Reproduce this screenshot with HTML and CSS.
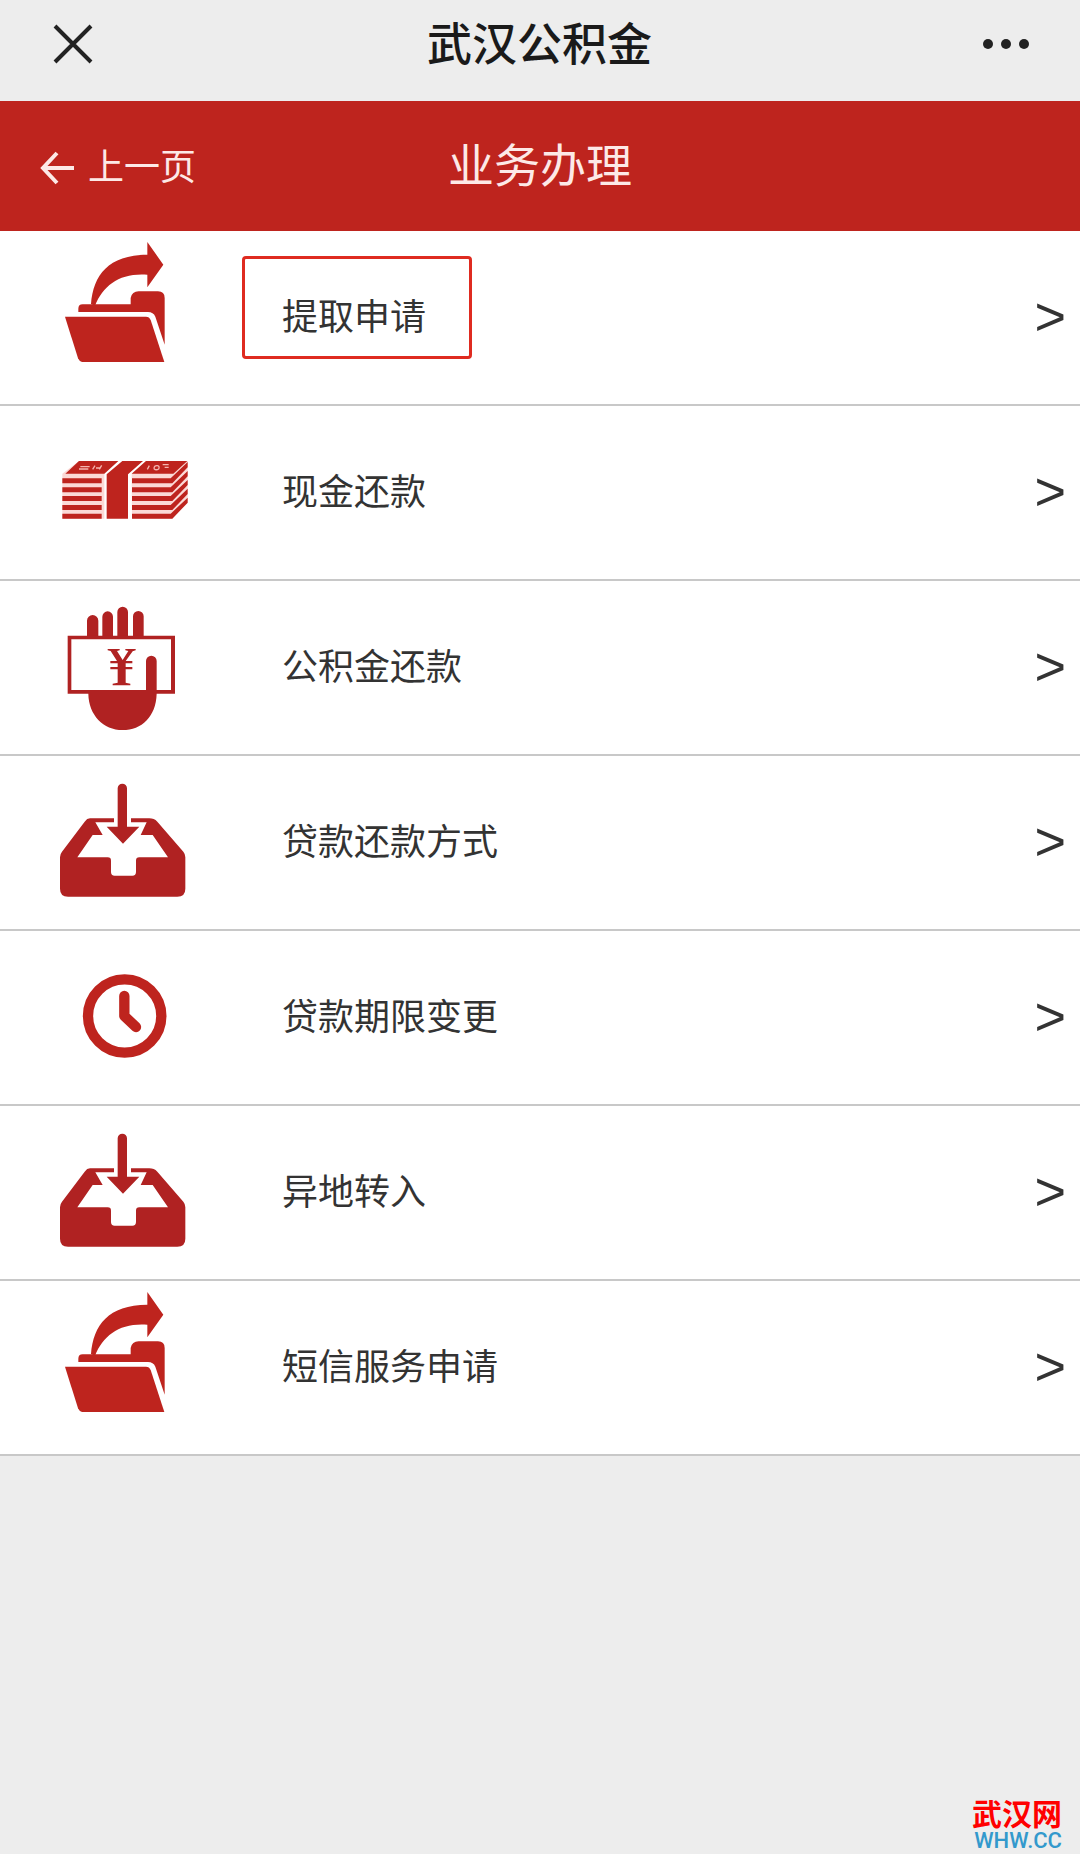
FILE: index.html
```html
<!DOCTYPE html>
<html lang="zh-CN">
<head>
  <meta charset="UTF-8" />
  <meta name="viewport" content="width=device-width, initial-scale=1.0"/>
  <title>武汉公积金</title>
  <link rel="stylesheet" href="styles.css">
</head>
<body>

  <!-- Shared icon shapes -->
  <svg class="icon-defs" aria-hidden="true">
    <symbol id="icon-folder" viewBox="0 3 600 519">
      <path d="M153 222C160 135 205 75 322 74V36L370 104L322 172V134C240 128 190 165 165 227Z"/>
      <path d="M115 246V236Q115 223 128 223H272V204Q276 184 296 184H354Q374 184 374 204V344L346 260Q340 246 324 246Z"/>
      <path d="M75 260H318Q328 260 332 270L373 396H126Q118 394 114 385Z"/>
    </symbol>
    <symbol id="icon-tray" viewBox="0 -42 600 519">
      <path d="M233 55A14 14 0 0 1 261 55V170H298L249 221L200 170H233Z"/>
      <path fill-rule="evenodd" d="M150 145H222V157H166L188 195H158L112 262H203Q213 262 213 272V306Q213 317 224 317H277Q288 317 288 306V272Q288 262 298 262H384L338 195H302L320 157H273V145H328Q342 145 352 155L430 245Q436 252 436 262V356Q436 380 412 380H84Q60 380 60 356V262Q60 252 66 245L134 155Q141 145 150 145Z"/>
    </symbol>
  </svg>

  <!-- Top bar -->
  <header class="topbar">
    <button class="icon-btn" type="button" aria-label="关闭">
      <svg width="40" height="40" viewBox="0 0 40 40"><path class="line" d="M2 2L38 38M38 2L2 38"/></svg>
    </button>
    <h1>武汉公积金</h1>
    <button class="icon-btn" type="button" aria-label="更多">
      <svg width="48" height="40" viewBox="0 0 48 40"><circle cx="6" cy="20" r="5"/><circle cx="24" cy="20" r="5"/><circle cx="42" cy="20" r="5"/></svg>
    </button>
  </header>

  <!-- Page navigation -->
  <nav>
    <a class="back" href="#">
      <svg width="34" height="38" viewBox="0 0 34 38"><path d="M17 6L3 21L17 36M3 21H34"/></svg>
      <span>上一页</span>
    </a>
    <h2>业务办理</h2>
  </nav>

  <!-- Service list -->
  <ul class="services">
    <li><a href="#">
      <svg class="service-icon"><use href="#icon-folder"/></svg>
      <span class="label marked">提取申请</span><span class="arrow">&gt;</span>
    </a></li>
    <li><a href="#">
      <svg class="service-icon" viewBox="0 -102 600 519">
        <path class="bill-bg" d="M67 101L117 63H235L193 101V236H67ZM275 101L318 63H443V188L397 236H276Z"/>
        <path d="M67 115H185V130H67ZM67 142H185V157H67ZM67 168H185V183H67ZM67 195H185V210H67ZM67 221H185V236H67Z"/>
        <path d="M76 101L117 63H235L193 101ZM275 101L318 63H442L400 101Z"/>
        <path d="M200 236V103L247 63H309L264 103V236Z"/>
        <path d="M276 115H392L443 66V82L397 130H276ZM276 142H392L443 93V109L397 157H276ZM276 168H392L443 120V135L397 183H276ZM276 195H392L443 146V162L397 210H276ZM276 221H392L443 173V188L397 236H276Z"/>
        <path class="bill-mark" d="M117 87H145M121 80H149M158 88L165 77M168 84H180M178 88L185 76M322 88L328 77M342 86Q342 76 352 77Q360 79 356 87Q348 92 342 86M368 74H386M374 82H386"/>
      </svg>
      <span class="label">现金还款</span><span class="arrow">&gt;</span>
    </a></li>
    <li><a href="#">
      <svg class="service-icon dark" viewBox="0 -27 600 519">
        <path d="M141 138V92A17 17 0 0 1 175 92V138ZM187 138V80A16 16 0 0 1 219 80V138ZM232 138V66A16 16 0 0 1 264 66V138ZM279 138V79A16 16 0 0 1 311 79V138Z"/>
        <path fill-rule="evenodd" d="M83 137H405V311H350C348 380 305 420 248 420C190 420 146 375 145 311H83ZM94 148V300H318V213A16 16 0 0 1 350 213V300H393V148Z"/>
        <path d="M203 177H239V181L231 183L248 210L265 183L256 181V177H287V181L278 184L257 213H277V220H257V231H277V238H257V278L271 281V286H218V281L233 278V238H211V231H233V220H211V213H231L212 183L203 181Z"/>
      </svg>
      <span class="label">公积金还款</span><span class="arrow">&gt;</span>
    </a></li>
    <li><a href="#">
      <svg class="service-icon dark"><use href="#icon-tray"/></svg>
      <span class="label">贷款还款方式</span><span class="arrow">&gt;</span>
    </a></li>
    <li><a href="#">
      <svg class="service-icon" viewBox="-60 -57 600 519">
        <circle class="clock-ring" cx="194" cy="198" r="110"/>
        <path class="clock-hand" d="M193 138V198L228 231"/>
      </svg>
      <span class="label">贷款期限变更</span><span class="arrow">&gt;</span>
    </a></li>
    <li><a href="#">
      <svg class="service-icon dark"><use href="#icon-tray"/></svg>
      <span class="label">异地转入</span><span class="arrow">&gt;</span>
    </a></li>
    <li><a href="#">
      <svg class="service-icon"><use href="#icon-folder"/></svg>
      <span class="label">短信服务申请</span><span class="arrow">&gt;</span>
    </a></li>
  </ul>

  <div class="watermark">
    <strong>武汉网</strong>
    <span>WHW.CC</span>
  </div>

</body>
</html>
```
FILE: styles.css
```css
*,
*::after {
  box-sizing: border-box;
}

body {
  font-family: "Noto Sans CJK SC", sans-serif;
  background: #ededed;
  color: #333;
  margin: 0;
  min-height: 100vh;
  position: relative;
}

h1,
h2 {
  margin: 0;
  text-align: center;
}

a {
  color: inherit;
  text-decoration: none;
}

.icon-defs {
  position: absolute;
  width: 0;
  height: 0;
}

/* Top bar */
.topbar {
  display: grid;
  grid-template-columns: 1fr auto 1fr;
  align-items: center;
  height: 101px;
  padding: 0 50px 14px 53px;
}

.topbar h1 {
  padding: 0 4px 4px 0;
  font-size: 45px;
  line-height: 60px;
  font-weight: 500;
  color: #1a1a1a;
}

.icon-btn {
  display: flex;
  padding: 0;
  border: none;
  background: none;
  fill: #222;
  cursor: pointer;
}

.icon-btn:last-child {
  justify-self: end;
}

.line {
  fill: none;
  stroke: #222;
  stroke-width: 4;
}

/* Page navigation */
nav {
  display: grid;
  grid-template-columns: 1fr auto 1fr;
  align-items: center;
  height: 130px;
  padding: 0 40px;
  background: #be241e;
  color: #fde9e7;
}

.back {
  display: flex;
  align-items: center;
  gap: 14px;
  font-size: 36px;
  line-height: 48px;
}

.back span {
  padding-bottom: 4px;
}

.back svg {
  fill: none;
  stroke: #fde9e7;
  stroke-width: 4;
}

nav h2 {
  padding-bottom: 8px;
  font-size: 46px;
  line-height: 60px;
  font-weight: 400;
}

/* Service list */
.services {
  list-style: none;
  margin: 0;
  padding: 0;
  background: #fff;
}

.services li {
  border-bottom: 2px solid #c8c8c8;
}

.services a {
  display: flex;
  align-items: center;
  padding: 0 14px 0 40px;
}

.service-icon {
  flex: none;
  width: 200px;
  height: 173px;
  fill: #be241e;
}

.service-icon.dark {
  fill: #b02222;
}

.service-icon .bill-bg {
  fill: #fbd9d6;
}

.bill-mark {
  fill: none;
  stroke: #f5b5b0;
  stroke-width: 4;
}

.clock-ring,
.clock-hand {
  fill: none;
  stroke: #be241e;
  stroke-width: 31;
  stroke-linecap: round;
  stroke-linejoin: round;
}

.label {
  position: relative;
  flex: 1;
  margin-left: 42px;
  padding-bottom: 8px;
  font-size: 36px;
  line-height: 48px;
}

/* Red frame around the highlighted entry */
.marked::after {
  content: "";
  position: absolute;
  top: -34px;
  left: -40px;
  width: 230px;
  height: 103px;
  border: 3px solid #df2b20;
  border-radius: 4px;
}

.arrow {
  padding-bottom: 4px;
  font-family: "Liberation Sans", sans-serif;
  font-size: 54px;
  line-height: 60px;
}

/* Watermark */
.watermark {
  position: absolute;
  right: 18px;
  bottom: 0;
  display: flex;
  flex-direction: column;
  align-items: flex-end;
}

.watermark strong {
  font-size: 30px;
  line-height: 32px;
  font-weight: 700;
  color: #f00;
}

.watermark span {
  font-family: Roboto, "Liberation Sans", sans-serif;
  font-size: 22px;
  line-height: 26px;
  font-weight: 500;
  color: #39c;
}
```
